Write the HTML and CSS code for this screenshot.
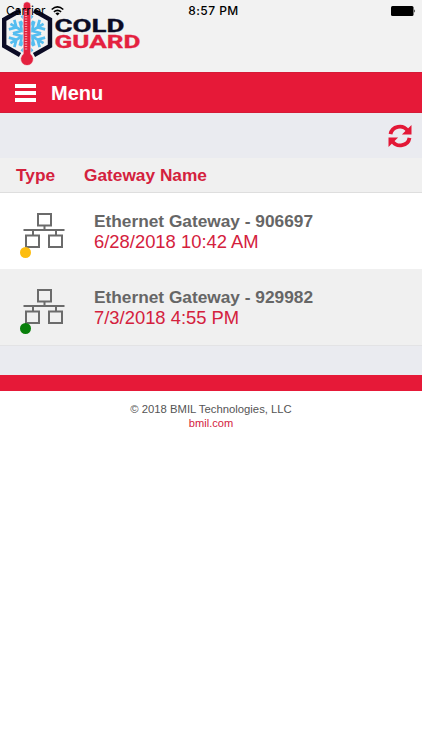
FILE: index.html
```html
<!DOCTYPE html>
<html lang="en">
<head>
<meta charset="utf-8">
<meta name="viewport" content="width=device-width, initial-scale=1">
<title>Cold Guard</title>
<link rel="stylesheet" href="styles.css">
</head>
<body>
<svg class="symbols" aria-hidden="true">
  <symbol id="network" viewBox="0 0 42 36">
    <g fill="none" stroke="#6b6b6b" stroke-width="2">
      <rect x="15" y="1" width="13" height="11.500"/>
      <path d="M21.500 12v5M.5 17h41M10 17v5M33 17v5"/>
      <rect x="3" y="22.500" width="13" height="11.500"/>
      <rect x="26" y="22.500" width="13" height="11.500"/>
    </g>
  </symbol>
  <symbol id="flake" viewBox="-15 -15 30 30">
    <g fill="none" stroke="#55bdf0" stroke-width="2">
      <g id="arm"><path d="M0 0V-14M-4 -13L0 -9L4 -13M-5 -9L0 -4L5 -9"/></g>
      <use href="#arm" transform="rotate(60)"/><use href="#arm" transform="rotate(120)"/>
      <use href="#arm" transform="rotate(180)"/><use href="#arm" transform="rotate(240)"/>
      <use href="#arm" transform="rotate(300)"/>
    </g>
  </symbol>
</svg>

<div class="statusbar">
  <span class="carrier">Carrier
    <svg class="wifi" viewBox="0 0 13 10"><g fill="none" stroke="#000" stroke-width="1.6"><path d="M.7 3.5Q6.5 -1.7 12.3 3.5M2.9 5.9Q6.5 2.8 10.1 5.9"/></g><path d="M4.4 7.4Q6.5 5.8 8.6 7.4L6.5 9.6Z"/></svg>
  </span>
  <span class="clock">8:57 PM</span>
  <svg class="battery" viewBox="0 0 25 10"><rect width="22.5" height="10" rx="1.5"/><path d="M23.3 3.2q1.7 1.8 0 3.6z"/></svg>
</div>

<header class="brand">
  <svg class="logo" viewBox="0 0 150 72">
    <path d="M20 10.500L4.200 19.500V46L20 55M34 10.500L50 19.500V46L34 55" fill="none" stroke="#0b0b25" stroke-width="4.400"/>
    <use href="#flake" x="6.500" y="13" width="41" height="41"/>
    <path d="M23.200 5.500a3.800 3.800 0 0 1 7.600 0V54a6.400 6.400 0 1 1-7.600 0Z" fill="#e4213f" stroke="#f2f2f2" stroke-width=".7"/>
    <path d="M26 11V50" stroke="#f5a3af" stroke-width="2.400" stroke-dasharray="1 1.500"/>
    <g class="wordmark">
      <text x="54.500" y="31.700" fill="#0b0b25" stroke="#0b0b25" textLength="70" lengthAdjust="spacingAndGlyphs">COLD</text>
      <text x="54.500" y="47.700" fill="#e4213f" stroke="#e4213f" textLength="86" lengthAdjust="spacingAndGlyphs">GUARD</text>
    </g>
  </svg>
</header>

<nav class="menu">
  <span class="bars"><i></i><i></i><i></i></span>
  <span class="label">Menu</span>
</nav>

<main>
  <div class="toolbar">
    <svg class="refresh" viewBox="0 0 24 24"><g fill="none" stroke="#e31837" stroke-width="3.800"><path d="M2.500 10.200C4 1.800 15 .200 19.500 6.500M21.500 13.800C20 22.200 9 23.800 4.500 17.500"/></g><path d="M23.500 1V10.600H13.900ZM.500 23V13.400H10.100Z" fill="#e31837"/></svg>
  </div>
  <div class="heading"><span class="col-type">Type</span><span>Gateway Name</span></div>
  <div class="row">
    <div class="type"><svg class="net"><use href="#network"/></svg><b class="dot amber"></b></div>
    <div class="info"><div class="name">Ethernet Gateway - 906697</div><div class="date">6/28/2018 10:42 AM</div></div>
  </div>
  <div class="row alt">
    <div class="type"><svg class="net"><use href="#network"/></svg><b class="dot green"></b></div>
    <div class="info"><div class="name">Ethernet Gateway - 929982</div><div class="date">7/3/2018 4:55 PM</div></div>
  </div>
</main>

<footer>
  <div class="copyright">© 2018 BMIL Technologies, LLC</div>
  <a>bmil.com</a>
</footer>
</body>
</html>
```
FILE: styles.css
```css
* { box-sizing: border-box; }
body { margin: 0; background: #fff; font-family: "Liberation Sans", Arial, sans-serif; }
svg { display: block; }
.symbols { position: absolute; width: 0; height: 0; }

/* system status bar lies over the brand header */
.statusbar {
  position: absolute; inset: 0 0 auto 0; height: 22px; z-index: 1;
  display: grid; grid-template-columns: 1fr auto 1fr; align-items: center;
  padding: 0 6px; font: 12px/22px Inter, sans-serif; color: #000;
}
.carrier { display: flex; align-items: center; gap: 5px; letter-spacing: .05px; }
.wifi { width: 13px; height: 10px; }
.clock { font-weight: 500; letter-spacing: .45px; padding-left: 5px; }
.battery { width: 25px; height: 10px; justify-self: end; }

.brand { height: 72px; background: #f2f2f2; }
.logo { width: 150px; height: 72px; }
.wordmark text { font: bold 18px Roboto, sans-serif; stroke-width: .3px; }

.menu {
  height: 41px; display: flex; align-items: center; gap: 15px; padding-left: 15px;
  background: #e61938; border-top: 1px solid #d51b37; border-bottom: 1px solid #d51b37;
  color: #fff; font-size: 20px; font-weight: bold;
}
.label { padding-top: 2px; }
.bars { display: grid; gap: 3px; width: 21px; }
.bars i { height: 4px; background: #fff; }

main { background: #eaebf0; padding-bottom: 29px; border-bottom: 16px solid #e61938; }
.toolbar { height: 45px; display: flex; justify-content: flex-end; align-items: center; padding-right: 10px; }
.refresh { width: 24px; height: 24px; }
.heading {
  height: 35px; display: flex; align-items: center; padding-left: 16px;
  background: #f0f0f0; border-bottom: 1px solid #dedede;
  color: #d4213d; font-size: 17.3px; font-weight: bold;
}
.col-type { width: 68px; }
.row { height: 76px; display: flex; background: #fff; }
.row.alt { height: 77px; background: #f0f0f0; border-bottom: 1px solid #e3e3e5; }
.type { position: relative; width: 94px; padding: 20px 0 0 23px; }
.net { width: 42px; height: 36px; }
.dot { position: absolute; left: 20px; top: 54px; width: 11px; height: 11px; border-radius: 50%; }
.amber { background: #fdbd10; }
.green { background: #087f0a; }
.info { padding-top: 18px; }
.name { height: 20px; line-height: 21px; color: #666; font-size: 17.3px; font-weight: bold; }
.date { height: 21px; line-height: 21px; color: #d4213d; font-size: 18.4px; }

footer { padding-top: 11px; text-align: center; color: #555; font-size: 11.1px; line-height: 14px; }
.copyright { font-size: 11.3px; }
footer a { color: #d4213d; }
```
